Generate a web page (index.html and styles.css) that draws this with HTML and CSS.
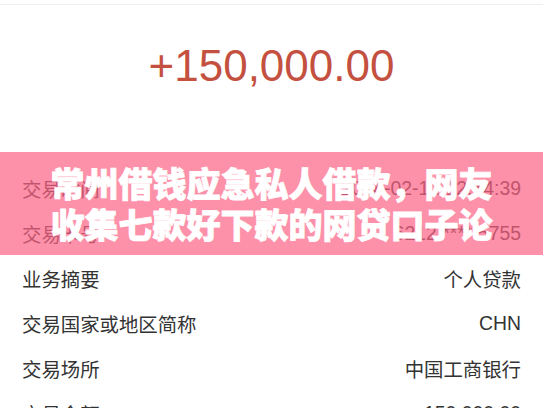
FILE: index.html
```html
<!DOCTYPE html>
<html>
<head>
  <title>交易详情</title>
  <link rel="stylesheet" href="styles.css">
</head>
<body>
  <div class="screen">
    <div class="topbar"></div>
    <div class="amount">+150,000.00</div>

    <div class="details">
      <div class="row"><span>交易时间</span><span>2024-02-12 12:14:39</span></div>
      <div class="row"><span>交易卡号</span><span>6212 **** 5755</span></div>
      <div class="row"><span>业务摘要</span><span>个人贷款</span></div>
      <div class="row"><span>交易国家或地区简称</span><span>CHN</span></div>
      <div class="row"><span>交易场所</span><span>中国工商银行</span></div>
      <div class="row"><span>交易金额</span><span>150,000.00</span></div>
    </div>

    <div class="banner">
      <div>常州借钱应急私人借款，网友</div>
      <div>收集七款好下款的网贷口子论</div>
    </div>
  </div>
</body>
</html>
```

FILE: styles.css
```css
html, body {
  margin: 0;
  height: 100%;
  overflow: hidden;
}
body {
  background: #fff;
  font-family: "Liberation Sans", "Noto Sans CJK SC", sans-serif;
  color: #333;
}
.screen {
  position: relative;
  height: 408px;
  overflow: hidden;
}
.topbar {
  height: 4px;
  border-bottom: 1px solid #efefef;
}
.amount {
  margin-top: 39px;
  text-align: center;
  font-size: 44px;
  line-height: 44px;
  color: #c4503f;
}
.details {
  margin-top: 78px;
}
.row {
  display: flex;
  justify-content: space-between;
  align-items: center;
  height: 45px;
  padding: 0 22px;
  font-size: 19.4px;
}
.banner {
  position: absolute;
  top: 152px;
  left: 0;
  right: 0;
  height: 103px;
  box-sizing: border-box;
  padding: 10px 0;
  background: rgba(252, 98, 132, 0.7);
  color: #fff;
  text-align: center;
  font-family: "Noto Sans CJK SC", sans-serif;
  font-size: 34px;
  line-height: 41px;
  font-weight: 900;
  -webkit-text-stroke: 0.8px #fff;
}
```
